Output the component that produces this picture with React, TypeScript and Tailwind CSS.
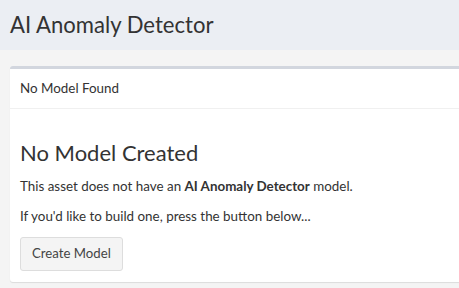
export default function App() {
  return (
    <div className="min-h-[288px] bg-[#f4f4f4] text-[#333] font-['Lato','Liberation_Sans',sans-serif]">
      <header className="h-[50px] bg-[#ebeef3] px-[10px] flex items-center">
        <h1 className="text-[22.1px] font-normal leading-none text-[#333] pt-[1px]">AI Anomaly Detector</h1>
      </header>
      <div className="pt-4 pl-[10px]">
        <div className="bg-white border-t-[3px] border-[#d2d6de] rounded-l-[3px] shadow-[0_1px_1px_rgba(0,0,0,0.1)]">
          <div className="h-[40px] px-[10px] flex items-center border-b border-[#f0f0f0] text-[13.4px]">
            No Model Found
          </div>
          <div className="px-[10px] pt-[10px] pb-[11px]">
            <h3 className="mt-[20px] mb-[10px] text-[22px] leading-[26px] pt-[1px]">No Model Created</h3>
            <p className="text-[13.4px] leading-[20px] mb-[10px]">
              This asset does not have an <b className="font-bold">AI Anomaly Detector</b> model.
            </p>
            <p className="text-[13.4px] leading-[20px] mb-[11px]">
              If you'd like to build one, press the button below...
            </p>
            <button className="h-[34px] px-[11px] text-[13.2px] bg-[#f4f4f4] border border-[#ddd] rounded-[3px] text-[#444]">
              Create Model
            </button>
          </div>
        </div>
      </div>
    </div>
  );
}
